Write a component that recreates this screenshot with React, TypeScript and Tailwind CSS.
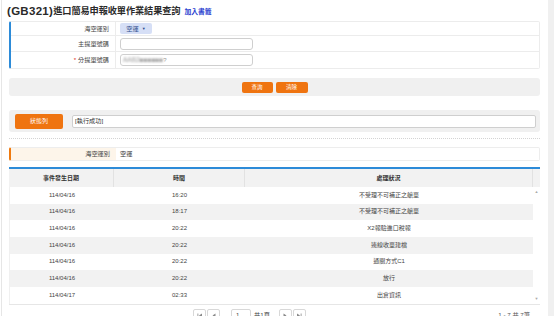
import React from 'react';

const font = { fontFamily: '"Liberation Sans", "Noto Sans CJK TC", sans-serif' };

const rows = [
  { date: '114/04/16', time: '16:20', status: '不受理不可補正之艙單' },
  { date: '114/04/16', time: '18:17', status: '不受理不可補正之艙單' },
  { date: '114/04/16', time: '20:22', status: 'X2報驗進口稅報' },
  { date: '114/04/16', time: '20:22', status: '連線收單建檔' },
  { date: '114/04/16', time: '20:22', status: '通關方式C1' },
  { date: '114/04/16', time: '20:22', status: '放行' },
  { date: '114/04/17', time: '02:33', status: '出倉資訊' },
];

function PageButton({ kind }: { kind: 'first' | 'prev' | 'next' | 'last' }) {
  return (
    <div className="flex h-[13px] w-[13px] items-center justify-center rounded-[2px] border border-[#d8d8d8] bg-white">
      <svg width="6" height="5" viewBox="0 0 6 5" fill="#8a8a8a">
        {kind === 'first' && (
          <>
            <rect x="0.5" y="0.5" width="0.8" height="4" />
            <path d="M5 0.5 L2 2.5 L5 4.5 Z" />
          </>
        )}
        {kind === 'prev' && <path d="M4.5 0.5 L1.5 2.5 L4.5 4.5 Z" />}
        {kind === 'next' && <path d="M1.5 0.5 L4.5 2.5 L1.5 4.5 Z" />}
        {kind === 'last' && (
          <>
            <path d="M1 0.5 L4 2.5 L1 4.5 Z" />
            <rect x="4.7" y="0.5" width="0.8" height="4" />
          </>
        )}
      </svg>
    </div>
  );
}

export default function App() {
  return (
    <div className="flex h-[316px] w-[554px] overflow-hidden bg-white text-[#333]" style={font}>
      {/* Main content */}
      <div className="ml-[1px] flex-1 border-l border-[#e6e6e6] pl-[7px] pr-[8px]">
        {/* Title */}
        <div className="-ml-[2px] flex h-[20px] items-center gap-[3px] pt-[4px]">
          <span className="text-[11.5px] font-bold tracking-[0.3px] text-[#2a2a2a]">(GB321)</span>
          <span className="-ml-[3px] text-[9.2px] font-bold tracking-[-0.1px] text-[#2a2a2a]">進口簡易申報收單作業結果查詢</span>
          <span className="ml-[1px] mt-[1px] text-[6.8px] font-bold text-[#2a3fd0]">加入書籤</span>
        </div>

        {/* Query form */}
        <div className="mt-[1px] rounded-[2px] border border-l-2 border-[#ececec] border-l-[#2d8bd8]">
          <div className="flex h-[14px] border-b border-[#ececec]">
            <div className="flex w-[105px] items-center justify-end border-r border-[#ececec] pr-[6px] text-[6.2px] text-[#444]">海空運別</div>
            <div className="flex items-center pl-[4px]">
              <div className="flex h-[11px] w-[32px] items-center justify-center gap-[3px] rounded-[2px] bg-[#d6dff6] text-[6.2px] text-[#2c4a8a]">
                空運<span className="text-[4px]">▼</span>
              </div>
            </div>
          </div>
          <div className="flex h-[16px] border-b border-[#ececec]">
            <div className="flex w-[105px] items-center justify-end border-r border-[#ececec] pr-[6px] text-[6.2px] text-[#444]">主提單號碼</div>
            <div className="flex items-center pl-[4px]">
              <div className="h-[12px] w-[133px] rounded-[3px] border border-[#cfcfcf] bg-white" />
            </div>
          </div>
          <div className="flex h-[16px]">
            <div className="flex w-[105px] items-center justify-end border-r border-[#ececec] pr-[6px] text-[6.2px] text-[#444]">
              <span className="mr-[2px] text-[#e02020]">*</span>分提單號碼
            </div>
            <div className="flex items-center pl-[4px]">
              <div className="flex h-[12px] w-[133px] items-center rounded-[3px] border border-[#cfcfcf] bg-white pl-[2px]">
                <span className="text-[6.5px] text-[#999] blur-[1.2px]">AAB2■■■■■■</span>
                <span className="text-[6px] text-[#999]">?</span>
              </div>
            </div>
          </div>
        </div>

        {/* Buttons bar */}
        <div className="mt-[9px] flex h-[18px] items-center justify-center gap-[3px] rounded-[3px] bg-[#f0f0f0]">
          <button className="flex h-[11px] w-[31px] items-center justify-center rounded-[2px] bg-[#ef7410] text-[5.5px] text-white">查詢</button>
          <button className="flex h-[11px] w-[32px] items-center justify-center rounded-[2px] bg-[#ef7410] text-[5.5px] text-white">清除</button>
        </div>

        {/* Status bar */}
        <div className="mt-[14px] flex h-[22px] items-center gap-[9px] rounded-[3px] bg-[#f0f0f0] pl-[6px] pr-[4px]">
          <div className="flex h-[15px] w-[48px] items-center justify-center rounded-[2px] bg-[#ef7410] text-[6px] text-white">狀態列</div>
          <div className="flex h-[13px] flex-1 items-center rounded-[2px] border border-[#cfcfcf] bg-white pl-[2px] text-[6.2px] text-[#333]">[執行成功]</div>
        </div>

        {/* Dotted divider */}
        <div className="mt-[6px] border-t border-dotted border-[#d4d4d4]" />

        {/* Info row */}
        <div className="mt-[8px] flex h-[14px] rounded-[2px] border border-l-2 border-[#ededed] border-l-[#ef7a10]">
          <div className="flex w-[105px] items-center justify-end bg-[#fdf5ea] pr-[6px] text-[6.2px] text-[#444]">海空運別</div>
          <div className="flex items-center pl-[4px] text-[6.2px] text-[#333]">空運</div>
        </div>

        {/* Table */}
        <div className="mt-[6px] border-t-2 border-[#2d8bd8]">
          <div className="flex h-[18px] bg-[#f2f2f2] text-[6px] font-bold text-[#333]">
            <div className="flex w-[105px] items-center justify-center border-r border-[#e2e2e2]">事件發生日期</div>
            <div className="flex w-[131px] items-center justify-center border-r border-[#e2e2e2]">時間</div>
            <div className="flex w-[288px] items-center justify-center border-r border-[#e2e2e2]">處理狀況</div>
            <div className="flex-1" />
          </div>
          <div className="flex border-l border-[#f0f0f0]">
            <div className="flex-1">
              {rows.map((r, i) => (
                <div
                  key={i}
                  className={`flex h-[16.67px] items-center text-[6px] text-[#444] ${i % 2 === 1 ? 'bg-[#f2f2f2]' : 'bg-white'}`}
                >
                  <div className="w-[104px] text-center">{r.date}</div>
                  <div className="w-[131px] text-center">{r.time}</div>
                  <div className="flex-1 text-center">{r.status}</div>
                </div>
              ))}
            </div>
            <div className="flex w-[7px] flex-col items-center justify-between py-[2px] text-[4px] text-[#aaa]">
              <span>▲</span>
              <span>▼</span>
            </div>
          </div>
          <div className="flex h-[20px] items-start border-t border-[#e6e6e6] pt-[4px]">
            <div className="ml-[184px] flex items-center gap-[1px]">
              <PageButton kind="first" />
              <PageButton kind="prev" />
            </div>
            <div className="ml-[11px] flex h-[13px] w-[20px] items-center rounded-[2px] border border-[#d8d8d8] pl-[4px] text-[6px] text-[#444]">1</div>
            <div className="ml-[3px] flex h-[13px] items-center text-[6.2px] text-[#444]">共1頁</div>
            <div className="ml-[9px] flex items-center gap-[1px]">
              <PageButton kind="next" />
              <PageButton kind="last" />
            </div>
            <div className="ml-auto mr-[10px] flex h-[13px] items-center text-[6.2px] text-[#555]">1 - 7 共 7筆</div>
          </div>
        </div>
      </div>

      {/* Page scrollbar */}
      <div className="w-[6px] bg-[#f0f0f0]" />
    </div>
  );
}
